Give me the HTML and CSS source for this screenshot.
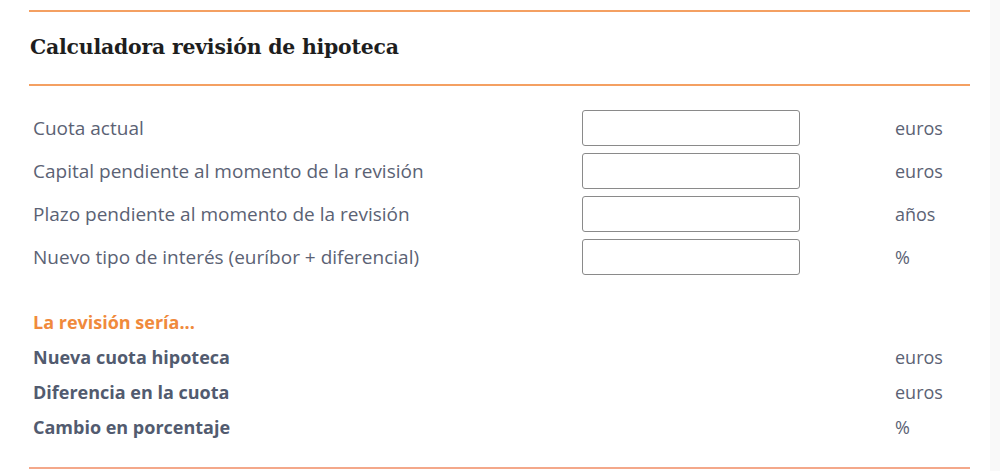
FILE: index.html
```html
<!DOCTYPE html>
<html lang="es">
<head>
<meta charset="utf-8">
<link rel="stylesheet" href="styles.css">
</head>
<body>
<div class="page">
  <div class="calc">
    <h1 class="title">Calculadora revisión de hipoteca</h1>
    <div class="form">
      <div class="row">
        <label class="label">Cuota actual</label>
        <input class="field" type="text">
        <span class="unit">euros</span>
      </div>
      <div class="row">
        <label class="label">Capital pendiente al momento de la revisión</label>
        <input class="field" type="text">
        <span class="unit">euros</span>
      </div>
      <div class="row">
        <label class="label">Plazo pendiente al momento de la revisión</label>
        <input class="field" type="text">
        <span class="unit">años</span>
      </div>
      <div class="row">
        <label class="label">Nuevo tipo de interés (euríbor + diferencial)</label>
        <input class="field" type="text">
        <span class="unit">%</span>
      </div>
    </div>
    <div class="results">
      <div class="results-title">La revisión sería...</div>
      <div class="rrow"><span class="rlabel">Nueva cuota hipoteca</span><span class="runit">euros</span></div>
      <div class="rrow"><span class="rlabel">Diferencia en la cuota</span><span class="runit">euros</span></div>
      <div class="rrow"><span class="rlabel">Cambio en porcentaje</span><span class="runit">%</span></div>
    </div>
  </div>
</div>
</body>
</html>
```

FILE: styles.css
```css
html, body {
  margin: 0;
  padding: 0;
  background: #f9f9f9;
}
.page {
  width: 990px;
  height: 471px;
  background: #ffffff;
  padding-top: 10px;
  box-sizing: border-box;
}
.calc {
  margin-left: 29px;
  width: 941px;
  border-top: 2px solid #f4a062;
  border-bottom: 2px solid #f4a88a;
}
.title {
  margin: 0;
  height: 74px;
  box-sizing: border-box;
  padding: 22px 0 0 1px;
  border-bottom: 2px solid #f4a062;
  font-family: "DejaVu Serif", serif;
  font-weight: bold;
  font-size: 20.4px;
  line-height: 26px;
  color: #1e1e1e;
  letter-spacing: -0.2px;
}
.form {
  padding-top: 24px;
  display: flex;
  flex-direction: column;
  gap: 7px;
}
.row {
  display: grid;
  grid-template-columns: 553px 218px 1fr;
  align-items: center;
  height: 36px;
}
.label, .unit, .rlabel, .runit, .results-title {
  font-family: "Open Sans", sans-serif;
  font-size: 18px;
  color: #5b6274;
}
.label {
  padding-left: 4px;
  font-size: 19px;
}
.field {
  width: 218px;
  height: 36px;
  box-sizing: border-box;
  border: 1px solid #8a8a8a;
  border-radius: 3px;
  margin: 0;
  padding: 0;
  background: #fff;
}
.unit, .runit {
  padding-left: 95px;
}
.results {
  padding: 35px 0 17px 0;
}
.results-title {
  padding-left: 4px;
  color: #f08a3c;
  font-weight: bold;
  height: 35px;
  line-height: 24px;
}
.rrow {
  display: grid;
  grid-template-columns: 771px 1fr;
  height: 35px;
  line-height: 24px;
}
.rlabel {
  padding-left: 4px;
  font-weight: bold;
  color: #525b6f;
}
```
